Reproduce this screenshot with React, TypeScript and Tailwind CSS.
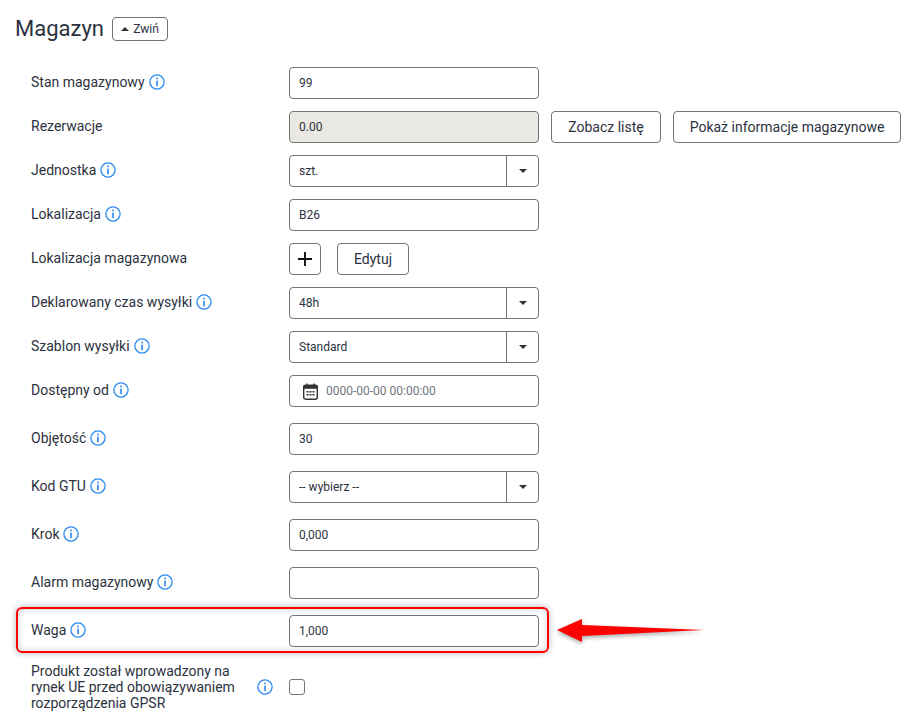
import React from "react";

function InfoIcon() {
  return (
    <svg width="16" height="16" viewBox="0 0 16 16" className="shrink-0">
      <circle cx="8" cy="8" r="7.1" fill="none" stroke="#2b8af0" strokeWidth="1.3" />
      <rect x="7.2" y="3.6" width="1.6" height="1.7" fill="#2b8af0" />
      <rect x="7.2" y="6.6" width="1.6" height="5.6" fill="#2b8af0" />
    </svg>
  );
}

function Row({ label, info = true, children, className = "" }: { label: React.ReactNode; info?: boolean; children: React.ReactNode; className?: string }) {
  return (
    <div className={`flex items-center ${className}`}>
      <div className="w-[258px] shrink-0 pb-[2px] flex items-center gap-[4px] text-sm text-[#2c3240]">
        <span>{label}</span>
        {info && <InfoIcon />}
      </div>
      {children}
    </div>
  );
}

function TextBox({ value, disabled = false }: { value?: string; disabled?: boolean }) {
  return (
    <div className={`w-[250px] h-[32px] border border-[#757575] rounded-[4px] px-[9px] flex items-center text-xs text-[#2c3240] ${disabled ? "bg-[#e9e8e2]" : "bg-white"}`}>
      {value}
    </div>
  );
}

function SelectBox({ value }: { value: string }) {
  return (
    <div className="w-[250px] h-[32px] border border-[#757575] rounded-[4px] flex items-center text-xs text-[#2c3240]">
      <span className="flex-1 px-[9px]">{value}</span>
      <span className="w-[32px] h-full border-l border-[#757575] flex items-center justify-center">
        <span className="w-0 h-0 border-x-[4px] border-x-transparent border-t-[4px] border-t-[#333]" />
      </span>
    </div>
  );
}

function Btn({ children, className = "" }: { children: React.ReactNode; className?: string }) {
  return (
    <button className={`h-[32px] border border-[#757575] rounded-[4px] bg-white text-sm text-[#2c3240] flex items-center justify-center ${className}`}>
      {children}
    </button>
  );
}

export default function App() {
  return (
    <div className="relative w-[919px] h-[723px] bg-white overflow-hidden font-['Roboto',sans-serif]">
      <div className="pt-[17px] pl-[15px] flex items-center gap-[8px] h-[41px]">
        <h2 className="text-[22px] leading-[24px] text-[#2c3240]">Magazyn</h2>
        <button className="w-[56px] h-[24px] border border-[#757575] rounded-[4px] text-xs text-[#2c3240] flex items-center justify-center gap-[4px]">
          <span className="w-0 h-0 border-x-[4px] border-x-transparent border-b-[4px] border-b-[#333]" />
          Zwiń
        </button>
      </div>

      <div className="pl-[31px] pt-[26px] flex flex-col">
        <Row label="Stan magazynowy">
          <TextBox value="99" />
        </Row>
        <Row label="Rezerwacje" info={false} className="mt-[12px]">
          <TextBox value="0.00" disabled />
          <Btn className="w-[110px] ml-[12px]">Zobacz listę</Btn>
          <Btn className="w-[228px] ml-[12px]">Pokaż informacje magazynowe</Btn>
        </Row>
        <Row label="Jednostka" className="mt-[12px]">
          <SelectBox value="szt." />
        </Row>
        <Row label="Lokalizacja" className="mt-[12px]">
          <TextBox value="B26" />
        </Row>
        <Row label="Lokalizacja magazynowa" info={false} className="mt-[12px]">
          <Btn className="w-[32px]">
            <svg width="16" height="16" viewBox="0 0 16 16">
              <path d="M8 1v14M1 8h14" stroke="#111" strokeWidth="1.9" fill="none" />
            </svg>
          </Btn>
          <Btn className="w-[72px] ml-[16px]">Edytuj</Btn>
        </Row>
        <Row label="Deklarowany czas wysyłki" className="mt-[12px]">
          <SelectBox value="48h" />
        </Row>
        <Row label="Szablon wysyłki" className="mt-[12px]">
          <SelectBox value="Standard" />
        </Row>
        <Row label="Dostępny od" className="mt-[12px]">
          <div className="w-[250px] h-[32px] border border-[#757575] rounded-[4px] pl-[13px] flex items-center gap-[8px] text-xs text-[#6f7680]">
            <svg width="15" height="17" viewBox="0 0 15 17" className="shrink-0">
              <rect x="0.7" y="2.2" width="13.6" height="14" rx="2" fill="none" stroke="#333" strokeWidth="1.4" />
              <rect x="0.7" y="2.2" width="13.6" height="3.6" fill="#333" />
              <path d="M4 0.5v3M11 0.5v3" stroke="#333" strokeWidth="1.4" />
              <path d="M3.5 8h2v1.5h-2zM6.5 8h2v1.5h-2zM9.5 8h2v1.5h-2zM3.5 11h2v1.5h-2zM6.5 11h2v1.5h-2zM9.5 11h2v1.5h-2z" fill="#333" />
            </svg>
            0000-00-00 00:00:00
          </div>
        </Row>
        <Row label="Objętość" className="mt-[16px]">
          <TextBox value="30" />
        </Row>
        <Row label="Kod GTU" className="mt-[16px]">
          <SelectBox value="-- wybierz --" />
        </Row>
        <Row label="Krok" className="mt-[16px]">
          <TextBox value="0,000" />
        </Row>
        <Row label="Alarm magazynowy" className="mt-[16px]">
          <TextBox />
        </Row>
        <Row label="Waga" className="mt-[16px]">
          <TextBox value="1,000" />
        </Row>
        <div className="flex items-center mt-[16px]">
          <div className="w-[258px] shrink-0 pb-[2px] flex items-center text-sm leading-[16px] text-[#2c3240]">
            <span className="w-[226px]">Produkt został wprowadzony na rynek UE przed obowiązywaniem rozporządzenia GPSR</span>
            <InfoIcon />
          </div>
          <span className="w-[16px] h-[16px] border border-[#757575] rounded-[3px] -translate-y-px" />
        </div>
      </div>

      {/* annotation drawn on top of the screenshot */}
      <div className="absolute left-[16px] top-[607px] w-[533px] h-[46px] border-2 border-[#ff0000] rounded-[6px] shadow-[0_0_6px_rgba(0,0,0,0.3),inset_0_0_6px_rgba(0,0,0,0.2)]" />
      <svg className="absolute left-[550px] top-[610px] drop-shadow-[0_2px_2px_rgba(0,0,0,0.35)]" width="165" height="36" viewBox="0 0 165 36">
        <path d="M7 20 L32 9 L32 15 L154 20 L32 26 L32 32 Z" fill="#ff0000" />
      </svg>
    </div>
  );
}
